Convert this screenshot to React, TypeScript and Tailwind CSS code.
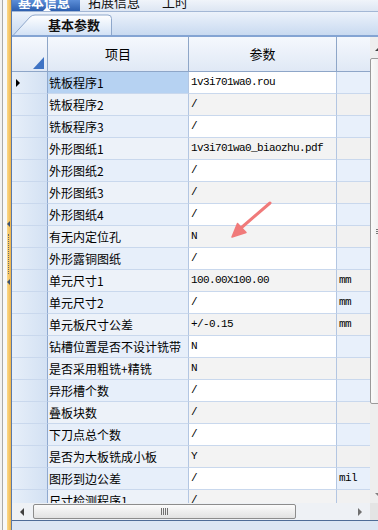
const rows: [string, string, string][] = [
  ['铣板程序1', '1v3i701wa0.rou', ''],
  ['铣板程序2', '/', ''],
  ['铣板程序3', '/', ''],
  ['外形图纸1', '1v3i701wa0_biaozhu.pdf', ''],
  ['外形图纸2', '/', ''],
  ['外形图纸3', '/', ''],
  ['外形图纸4', '/', ''],
  ['有无内定位孔', 'N', ''],
  ['外形露铜图纸', '/', ''],
  ['单元尺寸1', '100.00X100.00', 'mm'],
  ['单元尺寸2', '/', 'mm'],
  ['单元板尺寸公差', '+/-0.15', 'mm'],
  ['钻槽位置是否不设计铣带', 'N', ''],
  ['是否采用粗铣+精铣', 'N', ''],
  ['异形槽个数', '/', ''],
  ['叠板块数', '/', ''],
  ['下刀点总个数', '/', ''],
  ['是否为大板铣成小板', 'Y', ''],
  ['图形到边公差', '/', 'mil'],
  ['尺寸检测程序1', '/', ''],
]

function Splitter() {
  return (
    <div className="relative flex h-full w-[12px] shrink-0">
      <div className="w-[2px] bg-[#f2f2f2]" />
      <div className="w-[1px] bg-[#a9a9a9]" />
      <div className="w-[4px] bg-[#f8f8f8]" />
      <div className="w-[4px] bg-gradient-to-r from-[#fbd98a] to-[#f0b548]" />
      <div className="w-[1px] bg-[#5d7aa6]" />
      <div className="absolute left-[7px] top-[221px] h-0 w-0 border-y-[3px] border-r-[3px] border-y-transparent border-r-[#3c4f6e]" />
      <div className="absolute left-[8px] top-[234px] h-[40px] w-[1px] border-l border-dotted border-[#6a6a6a]" />
      <div className="absolute left-[7px] top-[279px] h-0 w-0 border-y-[3px] border-r-[3px] border-y-transparent border-r-[#3c4f6e]" />
    </div>
  )
}

function TopTabs() {
  return (
    <div className="flex h-[12px] shrink-0 border-b border-[#a3b7d5] bg-gradient-to-b from-[#f0f4fa] to-[#dde6f3] text-[13px] leading-[13px]">
      <div className="relative w-[68px] overflow-hidden bg-gradient-to-b from-[#5c8ed8] to-[#2c5eae]">
        <div className="-mt-[5px] pl-[6px] font-bold text-white">基本信息</div>
        <div className="absolute bottom-0 left-[31px] h-0 w-0 border-x-[4px] border-b-[4px] border-x-transparent border-b-white" />
      </div>
      <div className="-mt-[5px] ml-[8px] text-[#111]">拓展信息</div>
      <div className="-mt-[5px] ml-[22px] text-[#111]">工时</div>
    </div>
  )
}

function SubTabs() {
  return (
    <div className="flex h-[23px] shrink-0 items-end bg-gradient-to-b from-[#ecf2fb] to-[#c9daf0]">
      <div className="relative h-[21px] w-[102px]">
        <svg className="absolute inset-0" width="102" height="21" viewBox="0 0 102 21">
          <defs>
            <linearGradient id="tabg" x1="0" y1="0" x2="0" y2="1">
              <stop offset="0" stopColor="#ffffff" />
              <stop offset="1" stopColor="#d3e2f5" />
            </linearGradient>
          </defs>
          <path d="M1.5 21 L18 3 Q20 1 23 1 L96 1 Q99.5 1 99.5 4.5 L99.5 21" fill="url(#tabg)" stroke="#8ea7cb" />
        </svg>
        <div className="absolute left-[36px] top-[3px] text-[13px] font-bold leading-[16px] text-[#111]">基本参数</div>
      </div>
    </div>
  )
}

function Row({ r, i }: { r: [string, string, string]; i: number }) {
  const odd = i % 2 === 0
  const sel = i === 0
  return (
    <div className="flex h-[22px] shrink-0">
      <div className="flex w-[36px] shrink-0 items-center border-b border-r border-b-[#c9d8ed] border-r-[#8fa9cf] bg-gradient-to-r from-[#e7eff9] to-[#d3e1f3] pl-[4px]">
        {sel && <div className="h-0 w-0 border-y-[4px] border-l-[4px] border-y-transparent border-l-black" />}
      </div>
      <div
        className={`flex w-[141px] shrink-0 items-center overflow-hidden whitespace-nowrap border-b border-r border-b-[#c9d8ed] border-r-[#b3c6e2] pl-[1px] text-[12px] text-black ${
          sel ? 'bg-[#b6d2f2]' : odd ? 'bg-[#e7effa]' : 'bg-[#edf2f9]'
        }`}
      >
        {r[0]}
      </div>
      <div
        className={`flex w-[148px] shrink-0 items-center overflow-hidden whitespace-nowrap border-b border-r border-b-[#c9d8ed] border-r-[#b3c6e2] pl-[2px] font-['Liberation_Mono',monospace] text-[11px] tracking-[-0.6px] text-black ${
          odd ? 'bg-white' : 'bg-[#f3f3f3]'
        }`}
      >
        {r[1]}
      </div>
      <div
        className={`flex w-[33px] shrink-0 items-center border-b border-b-[#c9d8ed] pl-[2px] font-['Liberation_Mono',monospace] text-[11px] tracking-[-0.6px] text-black ${
          odd ? 'bg-[#e8f0fb]' : 'bg-[#f1f1f1]'
        }`}
      >
        {r[2]}
      </div>
    </div>
  )
}

function Grid() {
  return (
    <div className="flex min-w-0 flex-1 flex-col overflow-hidden">
      <div className="flex h-[35px] shrink-0 bg-gradient-to-b from-[#f5f8fd] to-[#dfe8f5] text-[13px] text-black">
        <div className="relative w-[36px] shrink-0 border-b border-r border-[#8ea6c8]">
          <svg className="absolute bottom-[2px] right-[3px]" width="11" height="12" viewBox="0 0 11 12">
            <path d="M11 0 L11 12 L0 12 Z" fill="#3f73c4" />
          </svg>
        </div>
        <div className="flex w-[141px] shrink-0 items-center justify-center border-b border-r border-[#8ea6c8]">项目</div>
        <div className="flex w-[148px] shrink-0 items-center justify-center border-b border-r border-[#8ea6c8]">参数</div>
        <div className="w-[33px] shrink-0 border-b border-[#8ea6c8]" />
      </div>
      {rows.map((r, i) => (
        <Row key={i} r={r} i={i} />
      ))}
    </div>
  )
}

function VScroll() {
  return (
    <div className="w-[8px] shrink-0 overflow-hidden bg-[#eeeeee]">
      <div className="flex h-full w-[17px] flex-col">
        <div className="flex h-[21px] shrink-0 items-center justify-center pt-[3px]">
          <div className="h-0 w-0 border-x-[4px] border-b-[4px] border-x-transparent border-b-[#404040]" />
        </div>
        <div className="mt-[0px] flex h-[346px] shrink-0 items-center justify-center rounded-[2px] border border-[#9a9a9a] bg-gradient-to-r from-[#fafafa] to-[#e6e6e6]">
          <div className="flex flex-col gap-[1px]">
            <div className="h-[1px] w-[6px] bg-[#777]" />
            <div className="h-[1px] w-[6px] bg-[#777]" />
            <div className="h-[1px] w-[6px] bg-[#777]" />
          </div>
        </div>
        <div className="flex-1" />
        <div className="flex h-[17px] shrink-0 items-center justify-center">
          <div className="h-0 w-0 border-x-[4px] border-t-[4px] border-x-transparent border-t-[#808080]" />
        </div>
      </div>
    </div>
  )
}

function HScroll() {
  return (
    <div className="flex h-[17px] shrink-0 items-center bg-[#eef1f5]">
      <div className="flex h-full w-[20px] shrink-0 items-center justify-center">
        <div className="h-0 w-0 border-y-[4px] border-r-[4px] border-y-transparent border-r-[#404040]" />
      </div>
      <div className="ml-[1px] flex h-[15px] w-[263px] shrink-0 items-center justify-center rounded-[2px] border border-[#8c8c8c] bg-gradient-to-b from-[#fbfbfb] to-[#e2e2e2]">
        <div className="flex gap-[1px]">
          <div className="h-[7px] w-[1px] bg-[#707070]" />
          <div className="h-[7px] w-[1px] bg-[#707070]" />
          <div className="h-[7px] w-[1px] bg-[#707070]" />
          <div className="h-[7px] w-[1px] bg-[#707070]" />
        </div>
      </div>
      <div className="flex-1" />
      <div className="flex h-full w-[20px] shrink-0 items-center justify-center">
        <div className="h-0 w-0 border-y-[4px] border-l-[4px] border-y-transparent border-l-[#707070]" />
      </div>
      <div className="h-full w-[8px] shrink-0 bg-[#e4e4e4]" />
    </div>
  )
}

export default function App() {
  return (
    <div className="relative flex h-[530px] w-[378px] overflow-hidden bg-[#f0f0f0] font-['Noto_Sans_CJK_SC','Noto_Sans',sans-serif]">
      <Splitter />
      <div className="flex min-w-0 flex-1 flex-col">
        <TopTabs />
        <SubTabs />
        <div className="h-[2px] shrink-0 bg-[#84a4d3]" />
        <div className="flex min-h-0 flex-1">
          <Grid />
          <VScroll />
        </div>
        <HScroll />
        <div className="h-[1px] shrink-0 bg-[#4e6c97]" />
        <div className="h-[9px] shrink-0 bg-[#dce6f3]" />
      </div>
      <svg className="pointer-events-none absolute left-0 top-0" width="378" height="530">
        <line x1="270" y1="203" x2="241" y2="228" stroke="#f07a7a" strokeWidth="3" strokeLinecap="round" />
        <path d="M232 237 L237.5 223.5 L246 232.5 Z" fill="#f07a7a" stroke="#f07a7a" strokeWidth="1.5" strokeLinejoin="round" />
      </svg>
    </div>
  )
}
